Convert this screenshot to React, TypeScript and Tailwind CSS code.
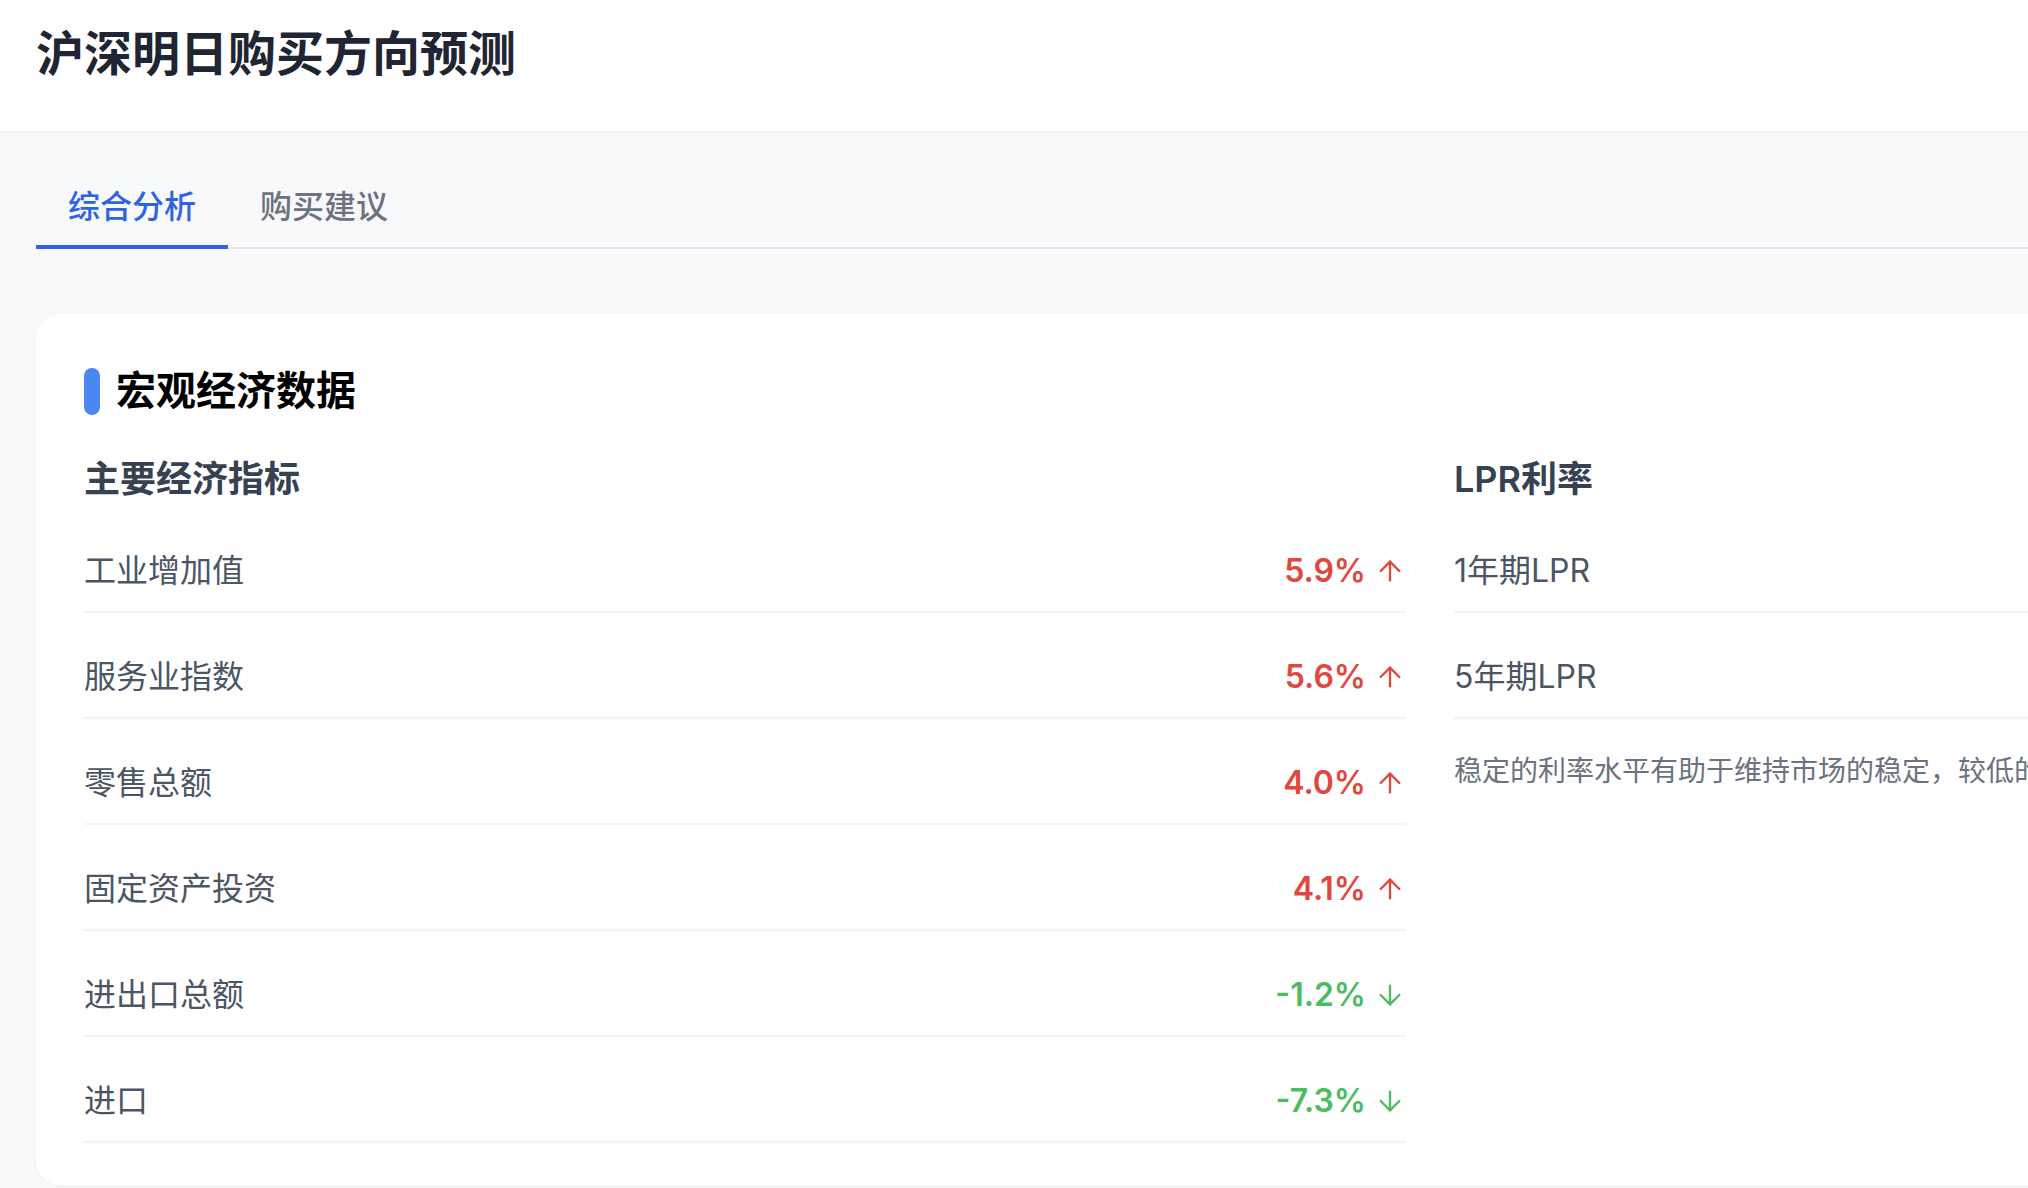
import React, { useState } from 'react';
import { ArrowUp, ArrowDown } from 'lucide-react';

const indicators = [
  { label: '工业增加值', value: '5.9%', up: true },
  { label: '服务业指数', value: '5.6%', up: true },
  { label: '零售总额', value: '4.0%', up: true },
  { label: '固定资产投资', value: '4.1%', up: true },
  { label: '进出口总额', value: '-1.2%', up: false },
  { label: '进口', value: '-7.3%', up: false },
];

const lpr = [
  { label: '1年期LPR', value: '3.10%' },
  { label: '5年期LPR', value: '3.60%' },
];

export default function App() {
  const [tab, setTab] = useState('analysis');

  const tabs = [
    { id: 'analysis', label: '综合分析' },
    { id: 'advice', label: '购买建议' },
  ];

  return (
    <div className="w-screen h-screen overflow-hidden bg-[#f8f9fb] font-[Inter,'Noto_Sans_CJK_SC',sans-serif]">
      <div className="w-[2860px]">
        {/* Header */}
        <header className="h-[131px] bg-white px-[36px] pt-[22px] shadow-[0_2px_6px_rgba(0,0,0,0.04)]">
          <h1 className="text-[48px] leading-[64px] font-bold text-[#1f2533]">沪深明日购买方向预测</h1>
        </header>

        <main className="px-[36px] pt-[36px]">
          {/* Tabs */}
          <div className="flex border-b-2 border-[#e5e7eb]">
            {tabs.map(t => (
              <button
                key={t.id}
                onClick={() => setTab(t.id)}
                className={`px-[32px] pt-[16px] pb-[14px] -mb-[2px] text-[32px] leading-[48px] font-medium border-b-4 ${
                  tab === t.id ? 'text-[#2f63e0] border-[#2f63e0]' : 'text-[#6b7280] border-transparent'
                }`}
              >
                {t.label}
              </button>
            ))}
          </div>

          {/* Card */}
          <section className="mt-[65px] bg-white rounded-[24px] px-[48px] pt-[49px] pb-[42px] shadow-[0_1px_4px_rgba(0,0,0,0.03)]">
            <div className="flex items-center gap-[16px]">
              <span className="w-[16px] h-[47px] rounded-full bg-[#4b87f0]" />
              <h2 className="text-[40px] leading-[56px] font-bold text-black">宏观经济数据</h2>
            </div>

            <div className="mt-[32px] grid grid-cols-2 gap-[48px]">
              {/* Left column */}
              <div>
                <h3 className="text-[36px] leading-[56px] font-semibold text-[#374151] mb-[24px]">主要经济指标</h3>
                <div className="flex flex-col gap-[24px]">
                  {indicators.map(item => (
                    <div key={item.label} className="flex items-center justify-between pt-[16px] pb-[16px] border-b-2 border-[#f3f4f6]">
                      <span className="text-[32px] leading-[48px] text-[#4b5563]">{item.label}</span>
                      <span className={`flex items-center gap-[8px] ${item.up ? 'text-[#e0483e]' : 'text-[#4cbb62]'}`}>
                        <span className="text-[32px] leading-[48px] font-semibold">{item.value}</span>
                        {item.up ? <ArrowUp size={32} strokeWidth={1.75} /> : <ArrowDown size={32} strokeWidth={1.75} />}
                      </span>
                    </div>
                  ))}
                </div>
              </div>

              {/* Right column */}
              <div>
                <h3 className="text-[36px] leading-[56px] font-semibold text-[#374151] mb-[24px]">LPR利率</h3>
                <div className="flex flex-col gap-[24px]">
                  {lpr.map(item => (
                    <div key={item.label} className="flex items-center justify-between pt-[16px] pb-[16px] border-b-2 border-[#f3f4f6]">
                      <span className="text-[32px] leading-[48px] text-[#4b5563]">{item.label}</span>
                      <span className="text-[32px] leading-[48px] font-semibold text-[#374151]">{item.value}</span>
                    </div>
                  ))}
                </div>
                <p className="mt-[32px] text-[28px] leading-[40px] text-[#6b7280]">
                  稳定的利率水平有助于维持市场的稳定，较低的利率环境有利于企业融资和居民消费。
                </p>
              </div>
            </div>
          </section>
        </main>
      </div>
    </div>
  );
}
